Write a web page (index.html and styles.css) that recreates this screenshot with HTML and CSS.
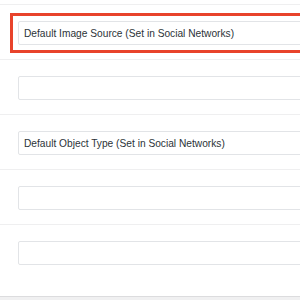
FILE: index.html
```html
<!DOCTYPE html>
<html lang="en">
<head>
  <meta charset="UTF-8">
  <title>Social Settings</title>
  <link rel="stylesheet" href="styles.css">
</head>
<body>
  <div class="settings">
    <div class="field-row">
      <div class="highlighted">
        <input class="text-field" type="text" value="Default Image Source (Set in Social Networks)">
      </div>
    </div>
    <div class="field-row">
      <input class="text-field" type="text" value="">
    </div>
    <div class="field-row">
      <input class="text-field" type="text" value="Default Object Type (Set in Social Networks)">
    </div>
    <div class="field-row">
      <input class="text-field" type="text" value="">
    </div>
    <div class="field-row">
      <input class="text-field" type="text" value="">
    </div>
  </div>
  <footer class="page-footer"></footer>
</body>
</html>
```

FILE: styles.css
```css
html, body {
  margin: 0;
  padding: 0;
  background-color: #fff;
  overflow: hidden;
}
body {
  display: flex;
  flex-direction: column;
  width: 300px;
  height: 300px;
  font-family: "Liberation Sans", Arial, sans-serif;
  color: #2c3338;
}
.settings {
  flex: 1;
  padding-top: 4px;
}
.field-row {
  border-top: 1px solid #efeff0;
  padding: 16px 0 14px 18px;
}
.text-field {
  display: block;
  box-sizing: border-box;
  width: 420px;
  height: 24px;
  margin: 0;
  padding: 0 5px;
  border: 1px solid #e2e4e7;
  border-radius: 2px;
  background: #fff;
  font-family: inherit;
  font-size: 10.2px;
  color: #2c3338;
}
.highlighted {
  width: 420px;
  outline: 3px solid #e8432b;
  outline-offset: 5px;
}
.page-footer {
  height: 3px;
  border-top: 1px solid #dcdcde;
  background-color: #f0f0f1;
}
```
